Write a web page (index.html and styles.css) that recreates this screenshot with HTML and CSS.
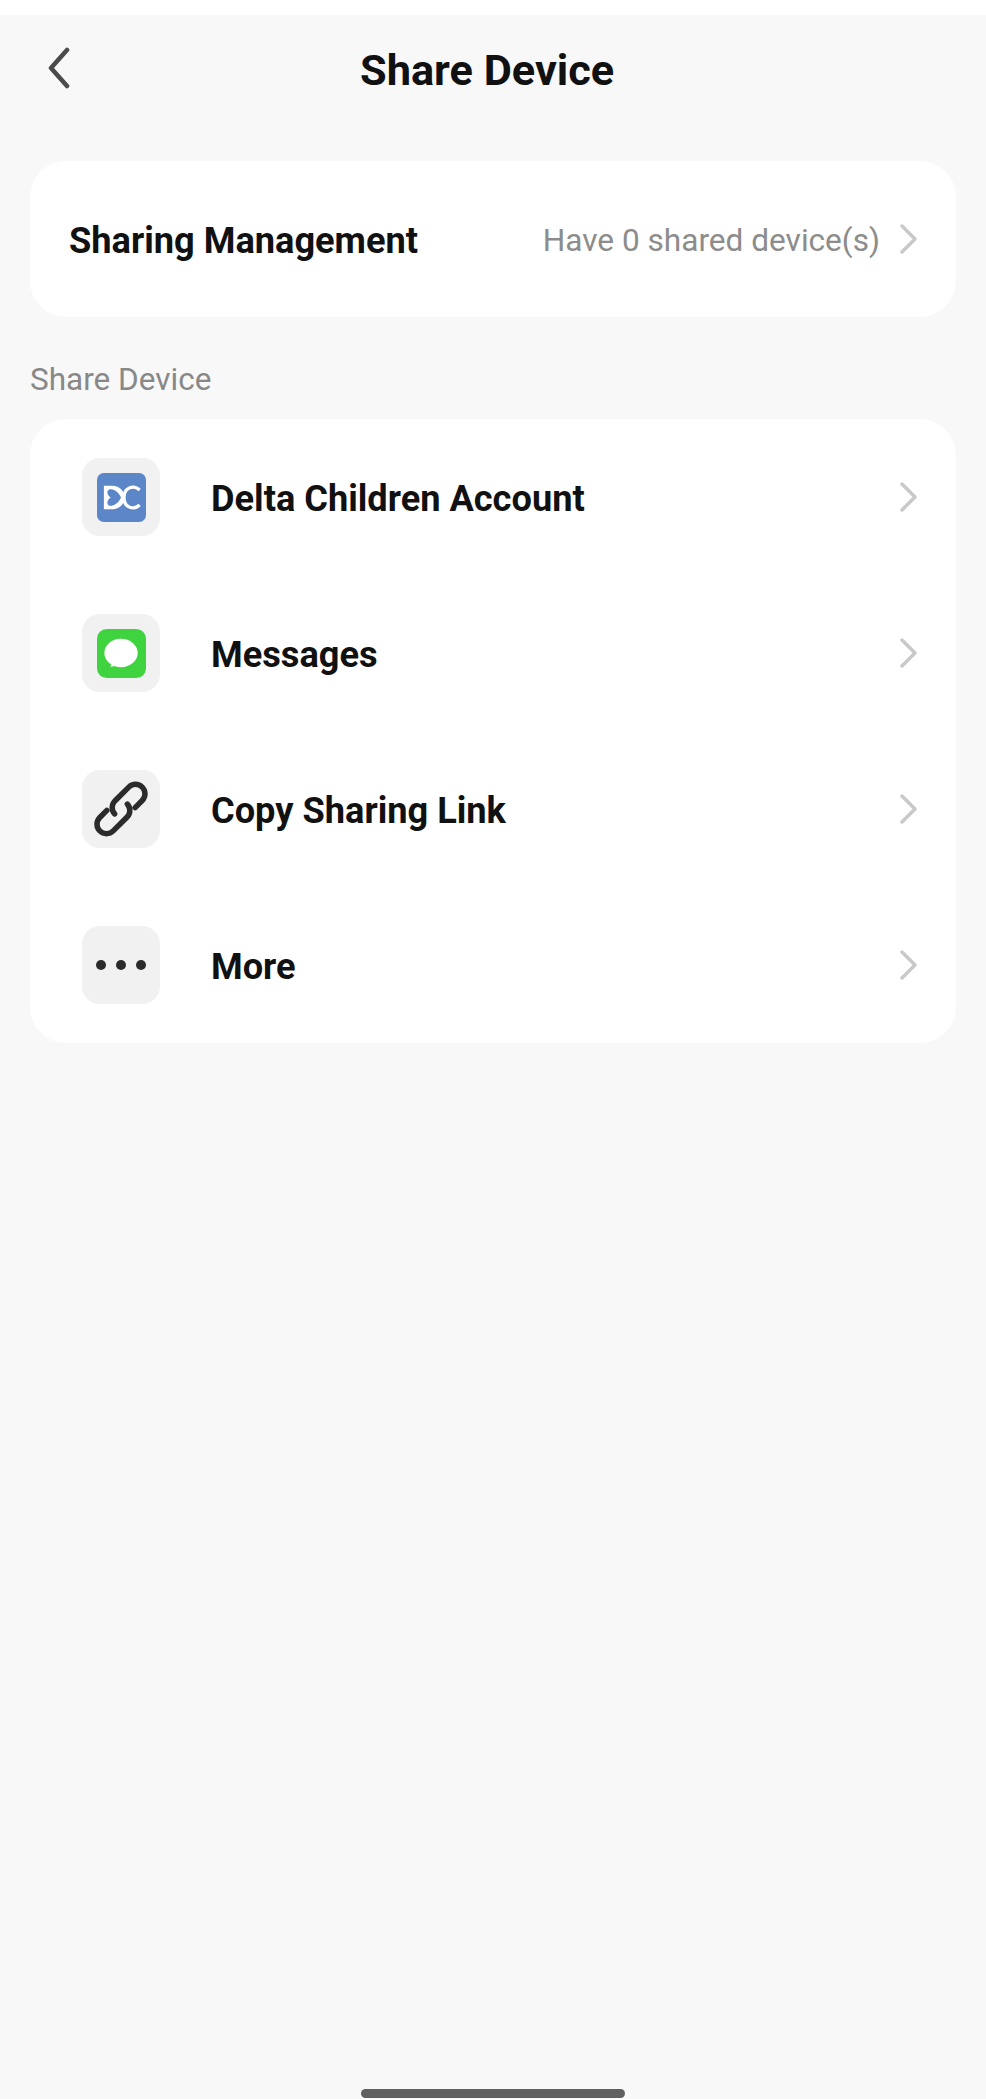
FILE: index.html
```html
<!DOCTYPE html>
<html lang="en">
<head>
    <meta charset="UTF-8">
    <meta name="viewport" content="width=device-width, initial-scale=1.0">
    <title>Share Device</title>
    <link rel="stylesheet" href="styles.css">
</head>
<body>
    <div class="screen">
        <header class="topbar">
            <button class="back" aria-label="Back">
                <svg width="24" height="44" viewBox="0 0 24 44"><path d="M21 4 L5 22 L21 40" class="back-line"/></svg>
            </button>
            <h1>Share Device</h1>
        </header>

        <section class="card manage">
            <span class="name">Sharing Management</span>
            <span class="value">Have 0 shared device(s)</span>
            <svg class="arrow" width="18" height="30" viewBox="0 0 18 30"><path d="M2 2 L15 15 L2 28"/></svg>
        </section>

        <h2 class="section-title">Share Device</h2>

        <section class="card">
            <div class="row">
                <div class="icon-box">
                    <svg class="app-icon" width="49" height="49" viewBox="0 0 50 50">
                        <rect width="50" height="50" rx="7" fill="#5b86c7"/>
                        <path d="M7 13 H15 C24 13 28 19 28 25 C28 31 24 37 15 37 H7 Z" fill="#fff"/>
                        <path d="M24.500 25 C22 31 17 33.500 14 33.500 C11 33.500 10 31 11 28.500 C11.500 27 12.500 26 14 25 C12.500 24 11.500 23 11 21.500 C10 19 11 16.500 14 16.500 C17 16.500 22 19 24.500 25 Z" fill="#5b86c7"/>
                        <path d="M43.500 17.500 C38 12 27.500 14 27.500 25 C27.500 36 38 38 43.500 32.500" fill="none" stroke="#fff" stroke-width="3.400"/>
                    </svg>
                </div>
                <span class="name">Delta Children Account</span>
                <svg class="arrow" width="18" height="30" viewBox="0 0 18 30"><path d="M2 2 L15 15 L2 28"/></svg>
            </div>
            <div class="row">
                <div class="icon-box">
                    <svg class="app-icon" width="49" height="49" viewBox="0 0 50 50">
                        <rect width="50" height="50" rx="10" fill="#3fd33f"/>
                        <ellipse cx="24.500" cy="24.500" rx="17" ry="14.500" fill="#fff"/>
                        <path d="M15 33 C15 35 14.500 37 13.500 38.500 C16 38.500 19 38 21 36 Z" fill="#fff"/>
                    </svg>
                </div>
                <span class="name">Messages</span>
                <svg class="arrow" width="18" height="30" viewBox="0 0 18 30"><path d="M2 2 L15 15 L2 28"/></svg>
            </div>
            <div class="row">
                <div class="icon-box">
                    <svg width="78" height="78" viewBox="0 0 78 78">
                        <g transform="rotate(-45 39 39)" fill="none" stroke="#2b2b2b" stroke-width="5.500" stroke-linecap="round">
                            <path d="M50 48 H60 A9.500 9.500 0 0 0 60 29 H40 A9.500 9.500 0 0 0 31 38"/>
                            <path d="M28 30 H18 A9.500 9.500 0 0 0 18 49 H38 A9.500 9.500 0 0 0 47 40"/>
                        </g>
                    </svg>
                </div>
                <span class="name">Copy Sharing Link</span>
                <svg class="arrow" width="18" height="30" viewBox="0 0 18 30"><path d="M2 2 L15 15 L2 28"/></svg>
            </div>
            <div class="row">
                <div class="icon-box">
                    <div class="dots"><i></i><i></i><i></i></div>
                </div>
                <span class="name">More</span>
                <svg class="arrow" width="18" height="30" viewBox="0 0 18 30"><path d="M2 2 L15 15 L2 28"/></svg>
            </div>
        </section>

        <div class="home-bar"></div>
    </div>
</body>
</html>
```

FILE: styles.css
```css
html, body {
    margin: 0;
    padding: 0;
}
body {
    font-family: Roboto, "Liberation Sans", Arial, sans-serif;
    background-color: #fff;
    color: #111;
}
.screen {
    height: 2084px;
    margin-top: 15px;
    padding: 0 30px;
    box-sizing: border-box;
    display: flex;
    flex-direction: column;
    background-color: #f8f8f8;
}
.topbar {
    height: 146px;
    flex-shrink: 0;
    display: flex;
    align-items: flex-start;
}
.back {
    width: 24px;
    height: 44px;
    margin: 31px 0 0 16px;
    padding: 0;
    border: none;
    background: none;
}
.back-line {
    fill: none;
    stroke: #4b4b4b;
    stroke-width: 4.500;
    stroke-linecap: round;
    stroke-linejoin: round;
}
h1 {
    margin: 0;
    margin-left: 290px;
    padding-top: 32px;
    font-size: 43.300px;
    line-height: 48px;
    font-weight: 700;
}
.card {
    flex-shrink: 0;
    background-color: #fff;
    border-radius: 36px;
}
.manage {
    height: 156px;
    padding: 0 38px 0 39px;
    display: flex;
    align-items: center;
}
.name {
    flex: 1;
    padding-top: 3px;
    font-size: 36.200px;
    font-weight: 700;
}
.value {
    margin-right: 20px;
    padding-top: 3px;
    font-size: 31.600px;
    color: #8c8c8c;
}
.arrow {
    flex-shrink: 0;
}
.arrow path {
    fill: none;
    stroke: #c9c9c9;
    stroke-width: 3.500;
    stroke-linecap: round;
    stroke-linejoin: round;
}
.section-title {
    margin: 0;
    height: 102px;
    padding-top: 45px;
    box-sizing: border-box;
    font-size: 31.500px;
    line-height: 36px;
    font-weight: 400;
    color: #888;
}
.row {
    height: 156px;
    padding: 0 38px 0 52px;
    display: flex;
    align-items: center;
}
.icon-box {
    width: 78px;
    height: 78px;
    margin-right: 51px;
    flex-shrink: 0;
    display: flex;
    align-items: center;
    justify-content: center;
    background-color: #f1f1f1;
    border-radius: 18px;
}
.dots {
    display: flex;
    gap: 10px;
}
.dots i {
    width: 10px;
    height: 10px;
    border-radius: 50%;
    background-color: #2b2b2b;
}
.home-bar {
    width: 264px;
    height: 9px;
    margin: auto auto 1px;
    border-radius: 5px;
    background-color: #606060;
}
```
